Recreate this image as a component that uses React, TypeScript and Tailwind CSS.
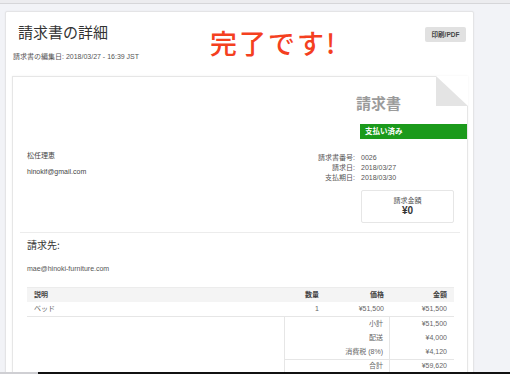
export default function App() {
    const meta = [
        { label: '請求書番号:', value: '0026' },
        { label: '請求日:', value: '2018/03/27' },
        { label: '支払期日:', value: '2018/03/30' },
    ];
    const totals = [
        { label: '小計', value: '¥51,500' },
        { label: '配送', value: '¥4,000' },
        { label: '消費税 (8%)', value: '¥4,120' },
    ];

    return (
        <div className="relative w-[510px] h-[374px] overflow-hidden bg-[#f2f3f7] font-['Liberation_Sans','Noto_Sans_CJK_JP',sans-serif]">
            <div className="h-[4px] bg-[#ececef] border-b border-[#d6d6d9]" />
            <div className="flex pl-[5px] pt-[7px]">
                <div className="w-[469px] bg-white border border-[#e4e4e6] rounded-[2px] shadow-[0_0_2px_rgba(0,0,0,0.05)] pb-[60px]">
                    {/* header */}
                    <div className="relative h-[64px]">
                        <div className="flex items-start">
                            <h1 className="pl-[12px] pt-[10px] text-[15px] leading-[20px] text-[#333] font-['Noto_Sans_CJK_JP',sans-serif]">請求書の詳細</h1>
                            <div className="ml-[102px] mt-[13px] text-[27px] leading-[36px] tracking-[2px] text-[#f4401f] font-medium font-['Noto_Sans_CJK_JP',sans-serif]">完了です!</div>
                            <button className="ml-auto mr-[7px] mt-[15px] h-[15px] w-[41px] rounded-[2px] bg-[#e1e1e1] text-[6.5px] font-bold text-[#444] leading-[15px]">印刷/PDF</button>
                        </div>
                        <div className="absolute left-[7px] top-[40px] text-[7px] leading-[10px] text-[#555]">請求書の編集日: 2018/03/27 - 16:39 JST</div>
                    </div>

                    {/* invoice paper */}
                    <div className="relative ml-[6px] mr-[5px] bg-white border border-[#e6e6e6] shadow-[0_0_2px_rgba(0,0,0,0.06)]">
                        <div className="absolute right-[-1px] top-[-1px] w-[32px] h-[30px] bg-white">
                            <svg width="32" height="30" viewBox="0 0 32 30">
                                <polygon points="0,0 0,30 32,30" fill="#e4e4e4" />
                            </svg>
                        </div>

                        <div className="pl-[14px] pr-[13px]">
                            <div className="flex justify-end pr-[53px] pt-[16px] h-[47px]">
                                <div className="text-[15px] leading-[20px] font-semibold text-[#9b9b9b] font-['Noto_Sans_CJK_JP',sans-serif]">請求書</div>
                            </div>
                            <div className="flex justify-end -mr-[13px]">
                                <div className="w-[107px] h-[15px] bg-[#1b9a1b] pl-[5px] text-[7.5px] leading-[15px] font-bold text-white">支払い済み</div>
                            </div>

                            <div className="flex mt-[12px]">
                                <div className="flex-1 text-[7px] text-[#444]">
                                    <div className="leading-[10px]">松任理恵</div>
                                    <div className="mt-[6px] leading-[10px]">hinokif@gmail.com</div>
                                </div>
                                <div className="w-[150px] pt-[2px] text-[7px] text-[#555]">
                                    {meta.map((m) => (
                                        <div key={m.label} className="flex leading-[10px]">
                                            <div className="w-[57px] text-right pr-[6px]">{m.label}</div>
                                            <div>{m.value}</div>
                                        </div>
                                    ))}
                                    <div className="ml-[57px] mt-[7px] h-[33px] border border-[#e6e6e6] rounded-[2px] flex flex-col items-center justify-center">
                                        <div className="text-[7px] leading-[9px] text-[#555]">請求金額</div>
                                        <div className="text-[10px] leading-[12px] font-bold text-[#333]">¥0</div>
                                    </div>
                                </div>
                            </div>
                        </div>

                        <div className="mx-[7px] mt-[9px] border-t border-[#ececec]" />

                        <div className="pl-[14px] pr-[13px]">
                            <div className="pt-[5px] text-[10px] leading-[14px] text-[#333] font-['Noto_Sans_CJK_JP',sans-serif]">請求先:</div>
                            <div className="mt-[12px] text-[7px] leading-[10px] text-[#555]">mae@hinoki-furniture.com</div>

                            <div className="mt-[13px] text-[7px]">
                                <div className="flex h-[15px] items-center bg-[#f4f4f4] border-t border-[#ececec] font-bold text-[#444] px-[7px]">
                                    <div className="flex-1">説明</div>
                                    <div className="w-[40px] text-right">数量</div>
                                    <div className="w-[65px] text-right">価格</div>
                                    <div className="w-[63px] text-right">金額</div>
                                </div>
                                <div className="flex h-[15px] items-center border-b border-[#e6e6e6] text-[#666] px-[7px]">
                                    <div className="flex-1">ベッド</div>
                                    <div className="w-[40px] text-right">1</div>
                                    <div className="w-[65px] text-right">¥51,500</div>
                                    <div className="w-[63px] text-right">¥51,500</div>
                                </div>
                                <div className="flex justify-end">
                                    <div className="w-[170px] border-l border-[#e6e6e6] text-[#666]">
                                        {totals.map((t) => (
                                            <div key={t.label} className="flex h-[14px]">
                                                <div className="w-[105px] border-r border-[#e6e6e6] shrink-0 flex items-center justify-end pr-[6px]">{t.label}</div>
                                                <div className="flex-1 flex items-center justify-end pr-[7px]">{t.value}</div>
                                            </div>
                                        ))}
                                        <div className="flex h-[14px] border-t border-[#e6e6e6]">
                                            <div className="w-[105px] border-r border-[#e6e6e6] shrink-0 flex items-center justify-end pr-[6px]">合計</div>
                                            <div className="flex-1 flex items-center justify-end pr-[7px]">¥59,620</div>
                                        </div>
                                    </div>
                                </div>
                            </div>
                        </div>
                    </div>
                </div>
            </div>
            <div className="absolute bottom-0 left-0 w-[38px] h-[2px] bg-[#cfcfd3]" />
            <div className="absolute bottom-0 left-[38px] right-0 h-[2px] bg-[#111]" />
        </div>
    );
}
